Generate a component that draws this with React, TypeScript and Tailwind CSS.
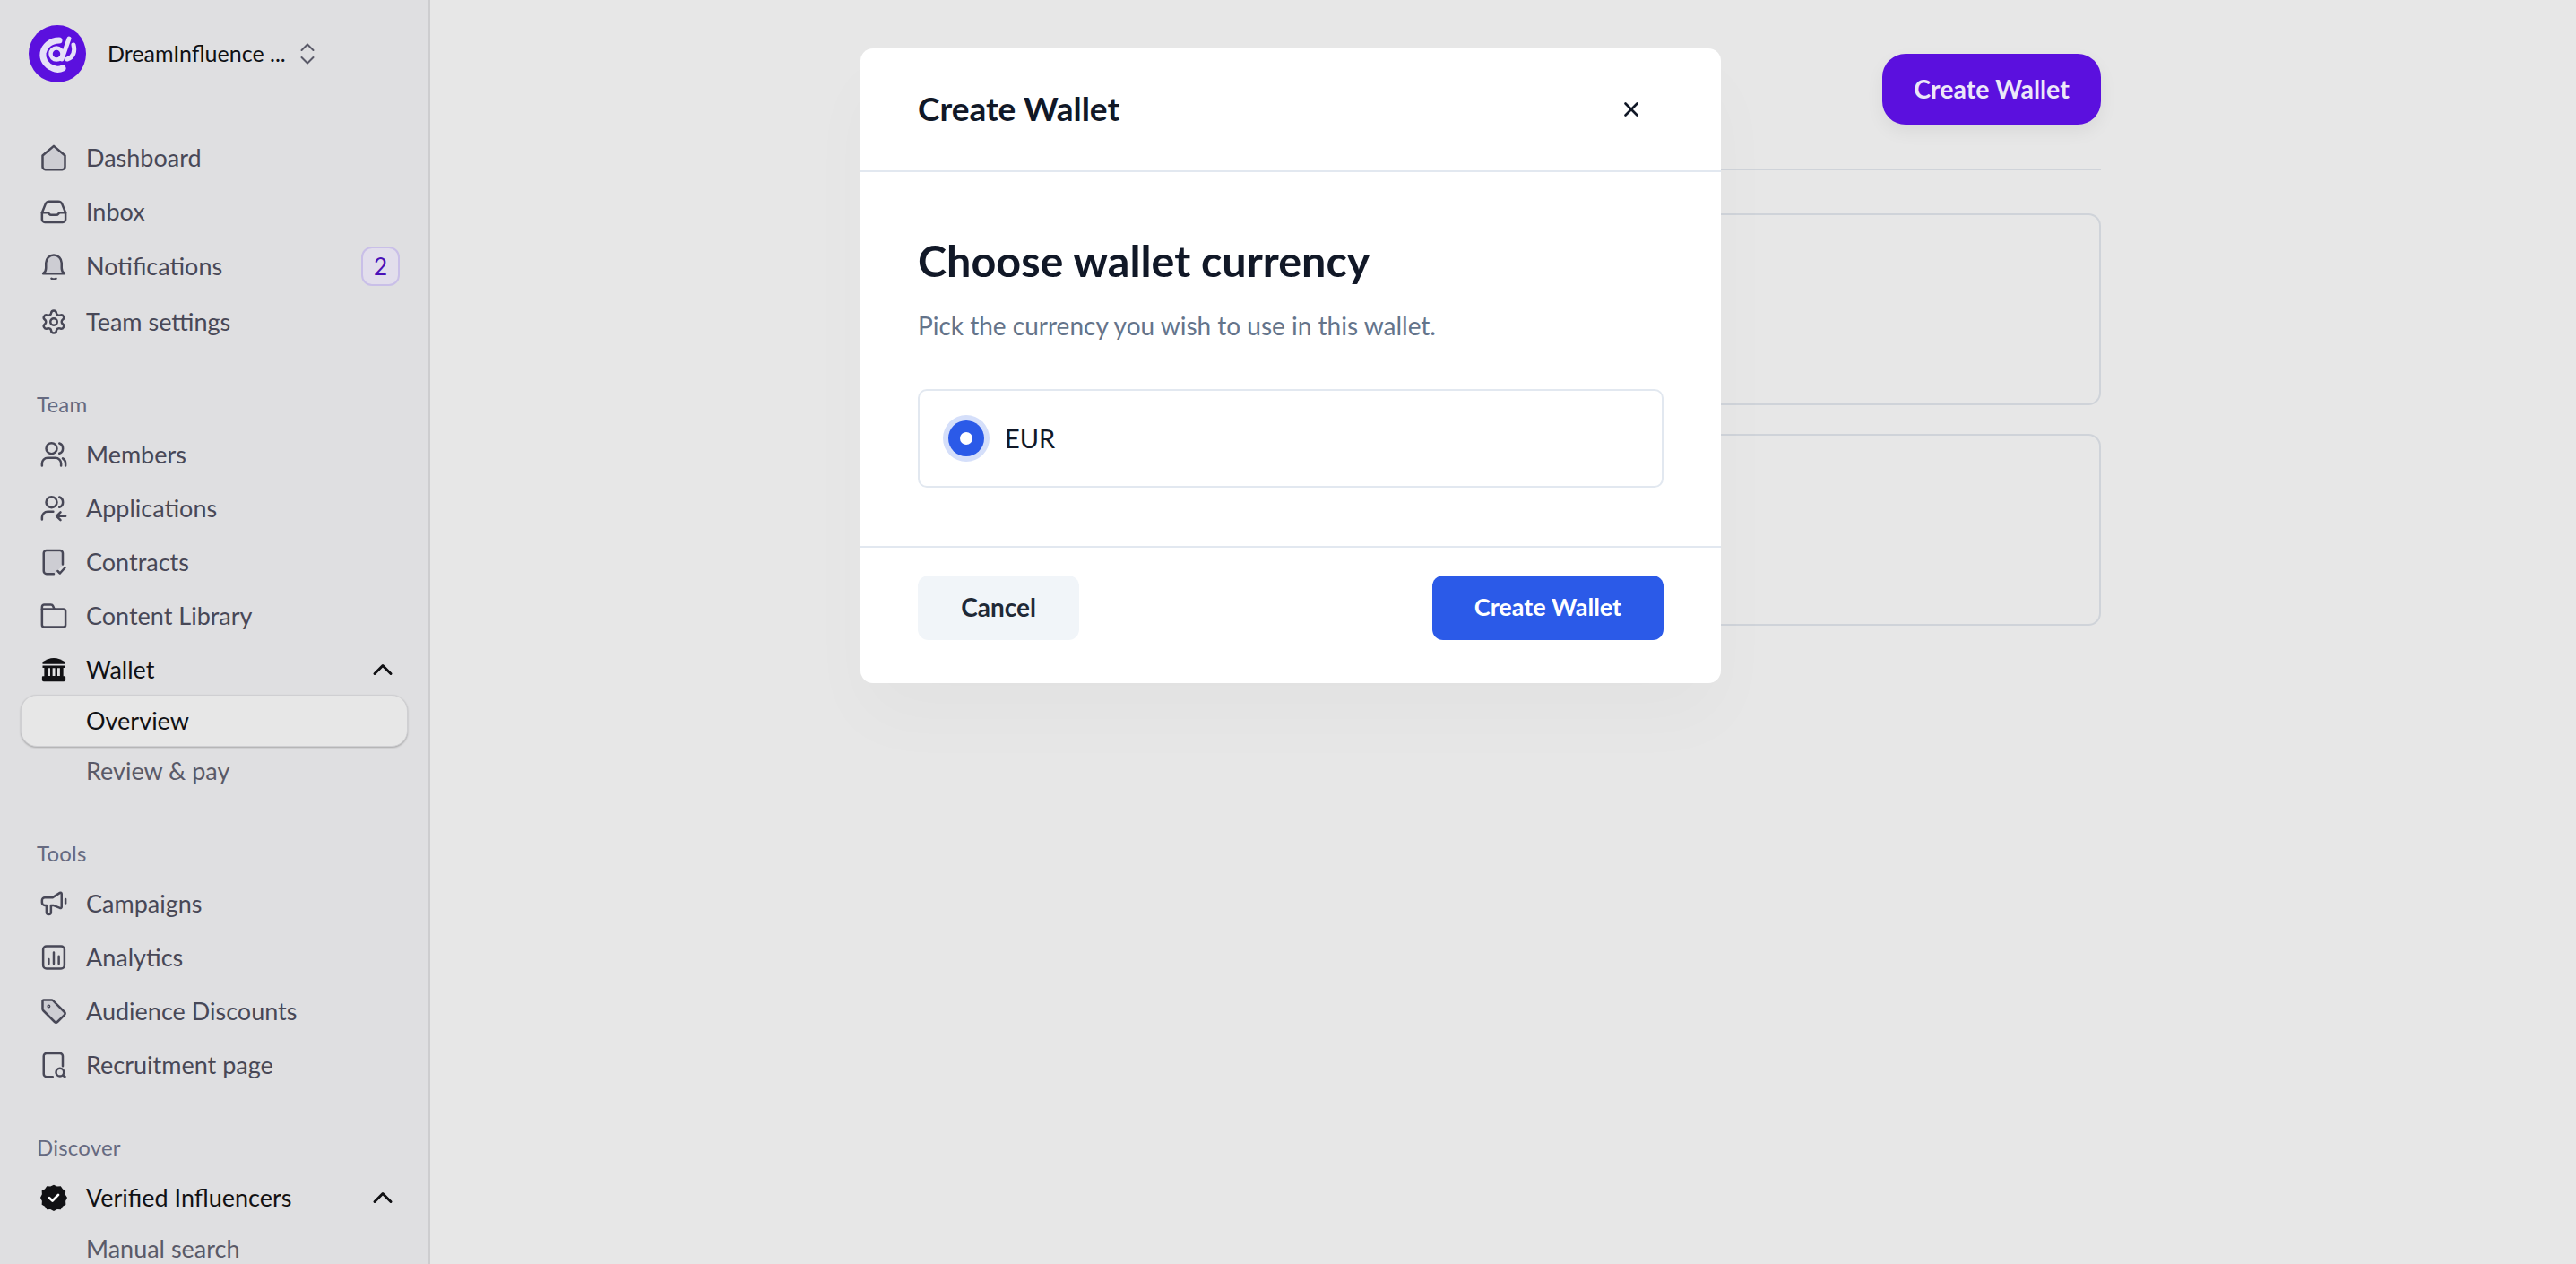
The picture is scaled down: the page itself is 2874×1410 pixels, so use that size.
import { ChevronUp, Settings, X } from "lucide-react";
import type { ReactNode } from "react";

const stroke = { fill: "none", stroke: "currentColor", strokeWidth: 2, strokeLinecap: "round" as const, strokeLinejoin: "round" as const };
const tint = "#cdcdd3";

function Ico({ children }: { children: ReactNode }) {
  return (
    <svg viewBox="0 0 24 24" className="w-[30px] h-[30px] shrink-0" {...stroke}>
      {children}
    </svg>
  );
}

const HomeIcon = () => (
  <Ico>
    <path fill={tint} d="M2 10 12 1.500 22 10v10a2.500 2.500 0 0 1-2.500 2.500h-15A2.500 2.500 0 0 1 2 20z" />
  </Ico>
);
const InboxIcon = () => (
  <Ico>
    <path d="M1.500 13 4.500 5.500A4 4 0 0 1 8 3h8a4 4 0 0 1 3.500 2.500L22.500 13v6a2.500 2.500 0 0 1-2.500 2.500H4A2.500 2.500 0 0 1 1.500 19z" />
    <path d="M1.500 13h5c1 0 1.500 2 3 2h5c1.500 0 2-2 3-2h5" />
  </Ico>
);
const BellIcon = () => (
  <Ico>
    <path fill={tint} d="M2.500 18.500c1.500-1 2.500-2.500 2.500-5V9a7 7 0 0 1 14 0v4.500c0 2.500 1 4 2.500 5z" />
    <path d="M10 23c1 .6 3 .6 4 0" />
  </Ico>
);
const UsersIcon = () => (
  <Ico>
    <circle cx="10" cy="6.500" r="4.800" />
    <path d="M17 2a4.800 4.800 0 0 1 0 9" />
    <path d="M1.500 22v-2a5 5 0 0 1 5-5h7a5 5 0 0 1 5 5v2" />
    <path d="M20 15.500a5 5 0 0 1 2.500 4V22" />
  </Ico>
);
const UsersInIcon = () => (
  <Ico>
    <circle cx="10" cy="6.500" r="4.800" />
    <path d="M17 2a4.800 4.800 0 0 1 0 9" />
    <path d="M1.500 22v-2a5 5 0 0 1 5-5h5" />
    <path d="M22.500 19h-7.500M18 15.500 14.500 19l3.500 3.500" />
  </Ico>
);
const ContractIcon = () => (
  <Ico>
    <path fill={tint} stroke="none" d="M3 3h17v12l-7 7H3z" />
    <path d="M12 22.500H5.500a2.500 2.500 0 0 1-2.500-2.500V4a2.500 2.500 0 0 1 2.500-2.500h12A2.500 2.500 0 0 1 20 4v10" />
    <path d="m15.500 20 2 2 4.500-5" />
  </Ico>
);
const FolderIcon = () => (
  <Ico>
    <path d="M1.500 4a2 2 0 0 1 2-2h6a2 2 0 0 1 1.800 1.200L12.500 6h8a2 2 0 0 1 2 2v12a2 2 0 0 1-2 2h-17a2 2 0 0 1-2-2z" />
    <path d="M1.500 6h11" />
  </Ico>
);
const BankIcon = () => (
  <svg viewBox="0 0 24 24" className="w-[30px] h-[30px] shrink-0" fill="#111114">
    <path d="M2 7V5c3-2 6.500-3.500 10-3.500S19 3 22 5v2z" />
    <path d="M2 8.300h20v2h-1.500v7.500H22a1 1 0 0 1 .5 1V21a1.500 1.500 0 0 1-1.500 1.500H3A1.500 1.500 0 0 1 1.500 21v-2.200a1 1 0 0 1 .5-1h1.500v-7.500H2z" />
    <path fill="#dfdfe1" d="M6.500 10.500h2.300v7H6.500zM10.900 10.500h2.300v7h-2.300zM15.200 10.500h2.300v7h-2.300z" />
  </svg>
);
const MegaphoneIcon = () => (
  <Ico>
    <path d="M4 6.500h7l6.500-4.200a1 1 0 0 1 1.500.9V15a1 1 0 0 1-1.500.9L11.500 13.500H9.500v6a2 2 0 0 1-4 0v-6H4a2.500 2.500 0 0 1-2.500-2.500V9A2.500 2.500 0 0 1 4 6.500z" />
    <path d="M22.500 8v3.500" />
  </Ico>
);
const ChartIcon = () => (
  <Ico>
    <rect x="2.500" y="2" width="19" height="20" rx="3" />
    <path d="M7.500 13.500V17.500M12 7.500v10M16.500 11v6.500" />
  </Ico>
);
const TagIcon = () => (
  <Ico>
    <path fill={tint} d="M2 3a1 1 0 0 1 1-1h7a2 2 0 0 1 1.400.6l10 10a2 2 0 0 1 0 2.800l-6 6a2 2 0 0 1-2.800 0l-10-10A2 2 0 0 1 2 10z" />
    <circle cx="7.500" cy="7.500" r=".6" />
  </Ico>
);
const PageSearchIcon = () => (
  <Ico>
    <path d="M11 22.500H5.500A2.500 2.500 0 0 1 3 20V4a2.500 2.500 0 0 1 2.500-2.500h12A2.500 2.500 0 0 1 20 4v9" />
    <circle cx="17.500" cy="18.500" r="3.500" />
    <path d="m20.500 21.500 1.500 1" />
  </Ico>
);
const VerifiedIcon = () => (
  <svg viewBox="0 0 24 24" className="w-[30px] h-[30px] shrink-0">
    <path fill="#111114" d="M12 .5 15 2l3.200-.2 1.800 2.500 2.500 1.800-.2 3.200L24 12l-1.500 3 .2 3.200-2.700 1.600-1.800 2.700-3.200-.2L12 24l-3-1.700-3.200.2L4 19.800l-2.700-1.600.2-3.200L0 12l1.500-3-.2-3.200L4 4.300l1.800-2.500 3.200.2z" />
    <path fill="none" stroke="#fff" strokeWidth="2.200" strokeLinecap="round" strokeLinejoin="round" d="m8 12.200 2.800 2.600L16 9.500" />
  </svg>
);

function NavRow({ icon, label, active, badge, chevron, h = "h-[60px]" }: { icon: ReactNode; label: string; active?: boolean; badge?: string; chevron?: boolean; h?: string }) {
  return (
    <div className={`flex items-center pl-[45px] pr-[37px] ${h} ${active ? "text-[#111114]" : "text-[#484857]"}`}>
      <span className="w-[51px] flex items-center">{icon}</span>
      <span className="text-[27px] leading-none mt-[-1px]">{label}</span>
      {badge && (
        <span className="ml-auto mr-[-5px] w-[43px] h-[44px] rounded-[12px] border-2 border-[#c9bfe8] bg-[#e2deec] text-[#4a10b8] text-[26px] flex items-center justify-center">
          {badge}
        </span>
      )}
      {chevron && <ChevronUp size={36} strokeWidth={2} className="ml-auto text-[#111114] mr-[-4px]" />}
    </div>
  );
}

function SubRow({ label, active }: { label: string; active?: boolean }) {
  if (active) {
    return (
      <div className="mx-[23px] h-[58px] rounded-[18px] bg-[#e7e7e7] border border-[#cfcfd2] shadow-[0_1px_2px_rgba(0,0,0,0.25)] flex items-center pl-[72px] text-[27px] text-[#111114] mt-[-2px]">
        {label}
      </div>
    );
  }
  return <div className="h-[55px] flex items-center pl-[96px] text-[27px] text-[#5a5a68]">{label}</div>;
}

function SectionLabel({ label, className }: { label: string; className: string }) {
  return <div className={`pl-[41px] text-[24px] leading-none text-[#666a80] tracking-[0.2px] ${className}`}>{label}</div>;
}

export default function App() {
  return (
    <div className="relative flex w-full h-screen overflow-hidden bg-[#e7e7e7] font-['Lato',sans-serif]">
      <aside className="w-[480px] shrink-0 bg-[#dfdfe1] border-r-2 border-[#cdcdcf] overflow-hidden">
        <div className="flex items-center pl-[32px] pt-[28px]">
          <div className="w-[64px] h-[64px] rounded-full bg-[#5b10de] flex items-center justify-center">
            <svg viewBox="0 0 64 64" className="w-[64px] h-[64px]" fill="none" stroke="#e6e0f8" strokeLinecap="round">
              <path strokeWidth="7" d="M38 48c-3 1.500-7 2-11 0-8-3-12-10-11-17 1-7 8-14 18-14" />
              <circle cx="31" cy="32" r="6.500" strokeWidth="4.500" />
              <path strokeWidth="5" d="M45 15 37 38" />
              <path strokeWidth="5" d="M50 22c2 7 0 14-7 16" />
            </svg>
          </div>
          <span className="ml-[24px] text-[25px] text-[#111114]">DreamInfluence ...</span>
          <svg viewBox="0 0 24 32" className="ml-[14px] w-[20px] h-[26px] text-[#5a5a68]" {...stroke} strokeWidth={2.500}>
            <path d="m4 11 8-8 8 8M4 21l8 8 8-8" />
          </svg>
        </div>

        <nav className="mt-[54px]">
          <NavRow icon={<HomeIcon />} label="Dashboard" />
          <NavRow icon={<InboxIcon />} label="Inbox" />
          <NavRow icon={<BellIcon />} label="Notifications" h="h-[62px]" badge="2" />
          <NavRow icon={<span className="text-[#484857]"><Settings size={30} strokeWidth={2} /></span>} label="Team settings" h="h-[62px]" />
        </nav>

        <SectionLabel label="Team" className="mt-[49px] mb-[14px]" />
        <nav>
          <NavRow icon={<UsersIcon />} label="Members" />
          <NavRow icon={<UsersInIcon />} label="Applications" />
          <NavRow icon={<ContractIcon />} label="Contracts" />
          <NavRow icon={<FolderIcon />} label="Content Library" />
          <NavRow icon={<BankIcon />} label="Wallet" active chevron />
          <SubRow label="Overview" active />
          <SubRow label="Review & pay" />
        </nav>

        <SectionLabel label="Tools" className="mt-[52px] mb-[14px]" />
        <nav>
          <NavRow icon={<MegaphoneIcon />} label="Campaigns" />
          <NavRow icon={<ChartIcon />} label="Analytics" />
          <NavRow icon={<TagIcon />} label="Audience Discounts" />
          <NavRow icon={<PageSearchIcon />} label="Recruitment page" />
        </nav>

        <SectionLabel label="Discover" className="mt-[50px] mb-[14px]" />
        <nav>
          <NavRow icon={<VerifiedIcon />} label="Verified Influencers" active chevron />
          <SubRow label="Manual search" />
        </nav>
      </aside>

      <main className="flex-1 pr-[530px] pl-[500px]">
        <div className="flex justify-end pt-[60px] pb-[49px] border-b-2 border-[#cfd3d9]">
          <button className="w-[244px] h-[79px] rounded-[26px] bg-[#5b10de] text-[#ece8f8] text-[28.500px] font-bold shadow-[0_8px_20px_rgba(0,0,0,0.06)]">
            Create Wallet
          </button>
        </div>
        <div className="mt-[48px] h-[214px] rounded-[14px] border-2 border-[#cfd3d9]" />
        <div className="mt-[32px] h-[214px] rounded-[14px] border-2 border-[#cfd3d9]" />
      </main>

      <div className="absolute inset-0 flex justify-center items-start pt-[54px] pl-[6px]">
        <div className="w-[960px] h-[708px] bg-white rounded-[14px] shadow-[0_40px_80px_rgba(0,0,0,0.025)] flex flex-col text-[#111827]">
          <div className="h-[138px] shrink-0 border-b-2 border-[#e2e8f0] flex items-center justify-between pl-[64px] pr-[87px]">
            <h2 className="text-[37px] font-bold mt-[-3px]">Create Wallet</h2>
            <X size={26} strokeWidth={2.500} className="text-[#111827]" />
          </div>
          <div className="flex-1 px-[64px] pt-[70px]">
            <h1 className="text-[48.500px] leading-[56px] font-bold">Choose wallet currency</h1>
            <p className="mt-[27px] text-[28px] leading-[36px] text-[#64748b]">Pick the currency you wish to use in this wallet.</p>
            <div className="mt-[53px] h-[110px] rounded-[10px] border-2 border-[#e2e8f0] flex items-center pl-[32px]">
              <span className="w-[40px] h-[40px] rounded-full bg-[#2b5ae8] ring-[6px] ring-[#d5dffa] flex items-center justify-center">
                <span className="w-[14px] h-[14px] rounded-full bg-white" />
              </span>
              <span className="ml-[23px] text-[29px] text-[#111827]">EUR</span>
            </div>
          </div>
          <div className="h-[153px] shrink-0 border-t-2 border-[#e2e8f0] flex items-start justify-between px-[64px] pt-[31px]">
            <button className="w-[180px] h-[72px] rounded-[12px] bg-[#f1f5f9] text-[28px] font-bold text-[#1f2937] pb-[2px]">Cancel</button>
            <button className="w-[258px] h-[72px] rounded-[12px] bg-[#2b5ae8] text-[27px] font-bold text-white pb-[2px]">Create Wallet</button>
          </div>
        </div>
      </div>
    </div>
  );
}
